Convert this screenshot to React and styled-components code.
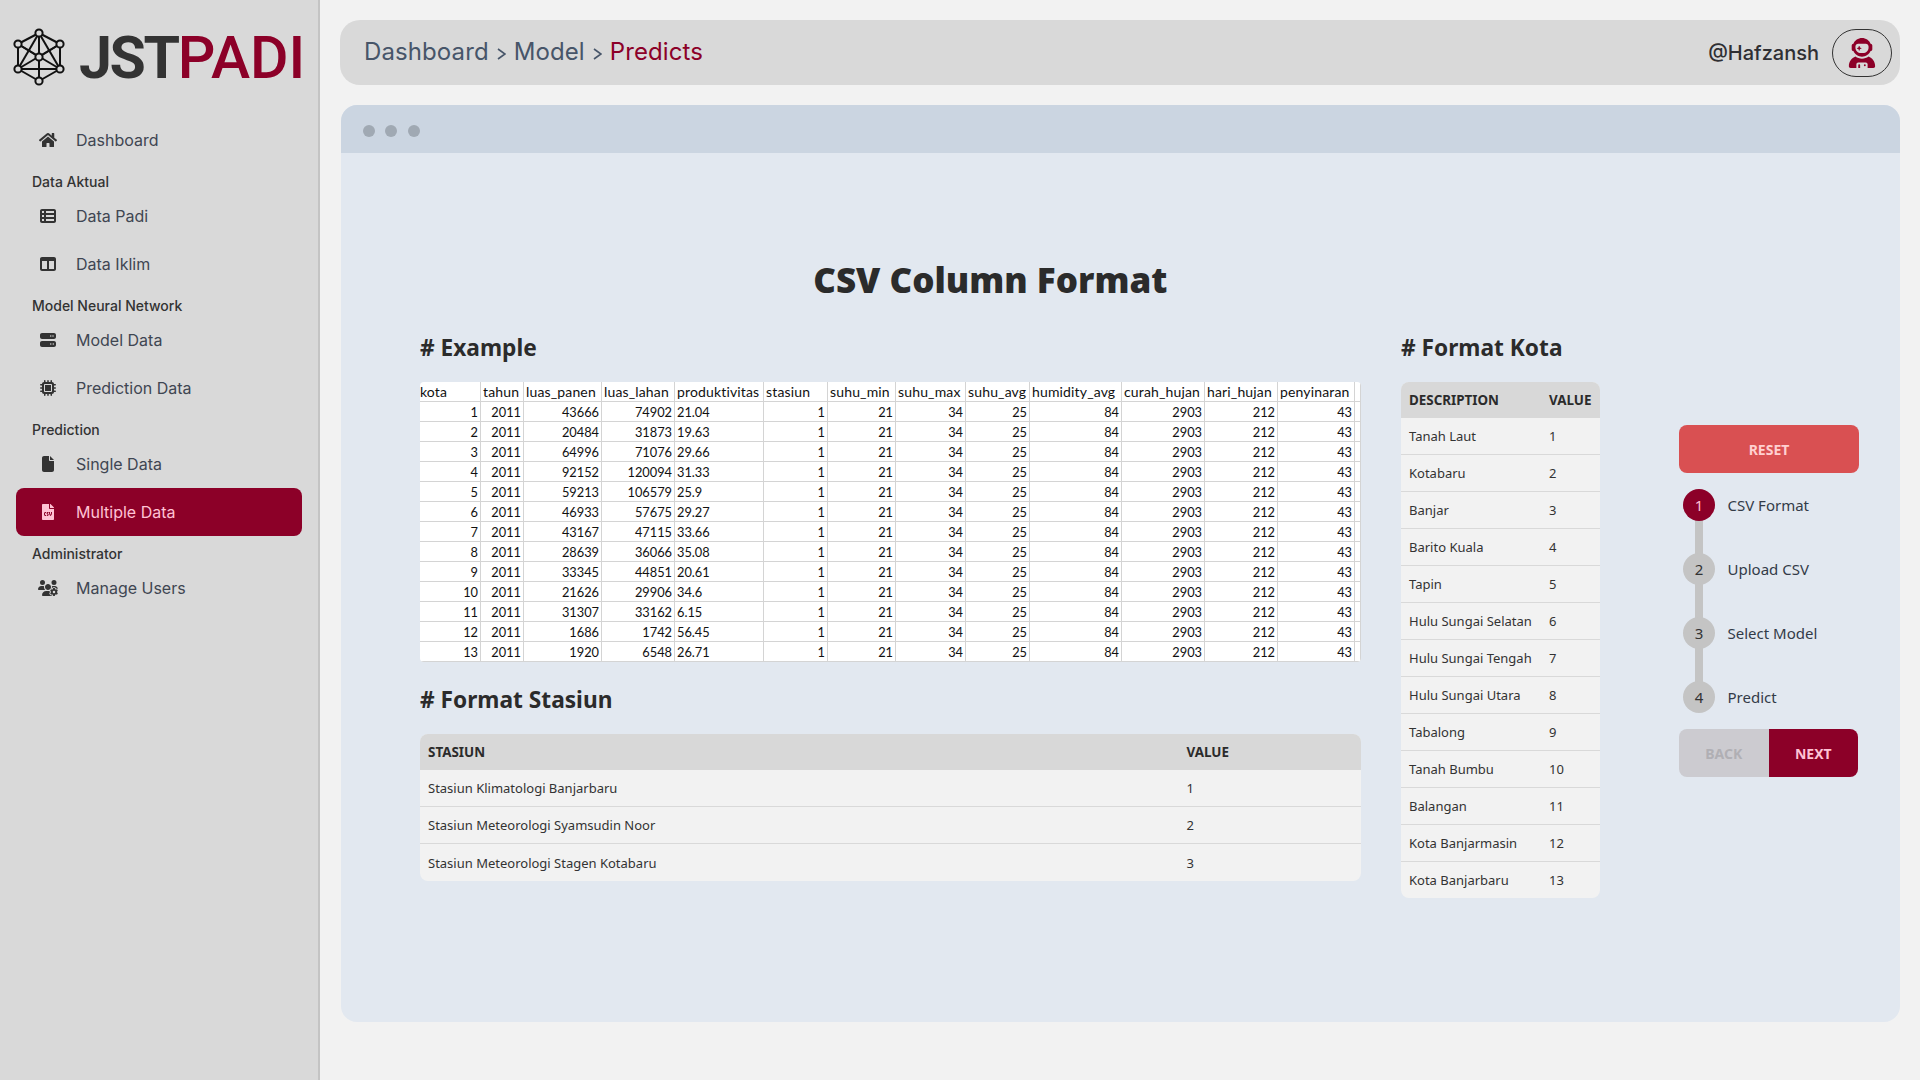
import React from 'react'
import styled, { createGlobalStyle } from 'styled-components'
import { FaHome, FaFileCsv } from 'react-icons/fa'
import {
  FaTableList, FaTableColumns, FaServer, FaMicrochip, FaFile, FaUsersGear, FaUserAstronaut,
} from 'react-icons/fa6'

const GlobalStyle = createGlobalStyle`
  * { box-sizing: border-box; }
  html, body { margin: 0; padding: 0; }
  body {
    background: #f2f2f2;
    font-family: "Noto Sans", sans-serif;
    color: #2b2b2b;
    height: 1080px;
    overflow: hidden;
  }
`

const Page = styled.div`
  display: flex;
  height: 1080px;
`

const Sidebar = styled.aside`
  width: 320px;
  flex: none;
  background: #d9d9d9;
  border-right: 2px solid #c4c4c4;
  padding: 0 16px;
  font-family: Inter, sans-serif;
`

const Brand = styled.div`
  display: flex;
  align-items: center;
  height: 116px;
  margin-left: -5px;
  padding-bottom: 3px;
`

const BrandMark = styled.svg`
  width: 56px;
  height: 60px;
  flex: none;
`

const BrandName = styled.div`
  font-family: Roboto, sans-serif;
  font-size: 59px;
  line-height: 1;
  margin: 1px 0 0 12px;
  font-weight: 700;
  letter-spacing: -2.4px;
  color: #333333;
  & span {
    font-weight: 500;
    letter-spacing: 0;
    color: #8c0028;
  }
`

const NavTitle = styled.div`
  height: 28px;
  line-height: 20px;
  padding: 8px 0 0 16px;
  font-size: 14px;
  font-weight: 500;
  color: #333333;
`

const NavItem = styled.a`
  display: flex;
  align-items: center;
  height: 48px;
  padding-left: 16px;
  border-radius: 8px;
  font-size: 16px;
  color: ${p => (p.$active ? '#ffc2d4' : '#3f4652')};
  background: ${p => (p.$active ? '#8c0028' : 'transparent')};
`

const NavIcon = styled.span`
  display: flex;
  justify-content: center;
  width: 32px;
  margin-right: 12px;
  color: ${p => (p.$active ? '#ffc2d4' : '#333333')};
  & svg {
    width: auto;
    height: ${p => p.$size || 16}px;
  }
`

const Main = styled.main`
  flex: 1;
  min-width: 0;
  padding: 20px 20px 0;
`

const Header = styled.header`
  display: flex;
  align-items: center;
  justify-content: space-between;
  height: 65px;
  padding: 0 8px 0 24px;
  background: #d9d9d9;
  border-radius: 20px;
  font-family: Inter, sans-serif;
`

const Crumbs = styled.nav`
  display: flex;
  align-items: center;
  gap: 8px;
  padding-bottom: 2px;
  font-size: 24px;
  letter-spacing: 0.1px;
  color: #475569;
`

const Crumb = styled.span`
  color: ${p => (p.$current ? '#8c0028' : '#475569')};
`

const CrumbArrow = styled.svg`
  width: 9px;
  height: 14px;
  margin-top: 4px;
`

const User = styled.div`
  display: flex;
  align-items: center;
  gap: 13px;
  font-size: 20px;
  font-weight: 500;
  color: #2f2f33;
`

const Avatar = styled.div`
  display: flex;
  align-items: center;
  justify-content: center;
  width: 60px;
  height: 48px;
  border: 1px solid #333333;
  border-radius: 24px;
  color: #8c0028;
  font-size: 30px;
`

const Window = styled.section`
  margin: 20px 0.5px 0;
  height: 917px;
  background: #e2e8f0;
  border-radius: 16px;
  overflow: hidden;
`

const WindowBar = styled.div`
  display: flex;
  align-items: center;
  gap: 10.5px;
  height: 48px;
  padding: 4px 0 0 22px;
  background: #cbd5e1;
`

const Dot = styled.i`
  width: 12px;
  height: 12px;
  border-radius: 50%;
  background: #a0a9b3;
`

const WindowBody = styled.div`
  display: flex;
`

const Content = styled.div`
  width: 1299.5px;
  flex: none;
  padding: 102px 0 0 79.5px;
`

const Title = styled.h1`
  margin: 0 0 25px -79.5px;
  height: 50px;
  line-height: 50px;
  text-align: center;
  font-size: 35px;
  font-weight: 900;
  color: #2b2b2b;
`

const Columns = styled.div`
  display: grid;
  grid-template-columns: 941px 199px;
  column-gap: 40px;
`

const Heading = styled.h2`
  margin: ${p => (p.$spaced ? '20px' : '0')} 0 17px;
  height: 35px;
  line-height: 35px;
  font-size: 22.7px;
  font-weight: 700;
  color: #2b2b2b;
`

const SheetGrid = styled.div`
  display: grid;
  grid-template-columns: 61px 43px 78px 73px 89px 64px 68px 70px 64px 92px 83px 73px 77px 6px;
  grid-auto-rows: 20px;
  background: #ffffff;
  border-radius: 4px;
  overflow: hidden;
  font-family: Lato, sans-serif;
  color: #111111;
`

const SheetCell = styled.div`
  font-size: ${p => (p.$head ? '14px' : '12.8px')};
  letter-spacing: ${p => (p.$head ? '0.15px' : '0')};
  line-height: ${p => (p.$head ? '20px' : '21px')};
  border-right: 1px solid #d4d4d4;
  border-bottom: 1px solid #d4d4d4;
  white-space: nowrap;
  overflow: hidden;
  text-align: ${p => (p.$left ? 'left' : 'right')};
  padding: ${p => (p.$left ? '0 0 0 2px' : '0 2px 0 0')};
  &:first-child { padding-left: 0; }
`

const DataTable = styled.table`
  width: 100%;
  border-collapse: collapse;
  table-layout: fixed;
  border-radius: 8px;
  overflow: hidden;
  background: #f2f2f2;
  font-size: 13px;
`

const HeadCell = styled.th`
  height: 36px;
  padding: 0 8px;
  text-align: left;
  font-size: 13.4px;
  font-weight: 700;
  background: #d8d8d8;
  color: #2b2b2b;
  width: ${p => p.$width || 'auto'};
`

const BodyCell = styled.td`
  height: 36.93px;
  padding: 0 8px;
  color: #333333;
  border-top: ${p => (p.$first ? '0' : '1px solid #d9d9d9')};
`

const Steps = styled.div`
  width: 180px;
  margin-left: 39px;
  padding-top: 272px;
`

const Reset = styled.button`
  display: block;
  width: 180px;
  height: 48px;
  border: 0;
  border-radius: 8px;
  background: #d95052;
  color: #ffd0d0;
  font-family: "Noto Sans", sans-serif;
  font-size: 14px;
  font-weight: 700;
`

const StepList = styled.ol`
  list-style: none;
  margin: 16px 0;
  padding: 0 0 0 4px;
`

const Step = styled.li`
  position: relative;
  display: flex;
  align-items: center;
  gap: 12.5px;
  height: 32px;
  font-size: 15px;
  color: #333b48;
  & + & { margin-top: 32px; }
  & + &::before {
    content: "";
    position: absolute;
    left: 12px;
    top: -40px;
    width: 8px;
    height: 48px;
    background: #c4c4c4;
  }
`

const StepDot = styled.span`
  position: relative;
  z-index: 1;
  display: flex;
  align-items: center;
  justify-content: center;
  width: 32px;
  height: 32px;
  border-radius: 50%;
  font-size: 15px;
  background: ${p => (p.$active ? '#8c0028' : '#c4c4c4')};
  color: ${p => (p.$active ? '#ffc2d4' : '#333333')};
`

const Pager = styled.div`
  display: flex;
  width: 179px;
  height: 48px;
  border-radius: 8px;
  overflow: hidden;
`

const PagerButton = styled.button`
  flex: 1;
  border: 0;
  font-family: "Noto Sans", sans-serif;
  font-size: 14px;
  font-weight: 700;
  background: ${p => (p.$primary ? '#8c0028' : '#cccbd0')};
  color: ${p => (p.$primary ? '#ffc2d4' : '#b0afb4')};
`

const nav = [
  { label: 'Dashboard', icon: FaHome, size: 18 },
  { title: 'Data Aktual' },
  { label: 'Data Padi', icon: FaTableList },
  { label: 'Data Iklim', icon: FaTableColumns },
  { title: 'Model Neural Network' },
  { label: 'Model Data', icon: FaServer },
  { label: 'Prediction Data', icon: FaMicrochip },
  { title: 'Prediction' },
  { label: 'Single Data', icon: FaFile },
  { label: 'Multiple Data', icon: FaFileCsv, active: true },
  { title: 'Administrator' },
  { label: 'Manage Users', icon: FaUsersGear, size: 20 },
]

const sheetHead = ['kota', 'tahun', 'luas_panen', 'luas_lahan', 'produktivitas', 'stasiun', 'suhu_min', 'suhu_max', 'suhu_avg', 'humidity_avg', 'curah_hujan', 'hari_hujan', 'penyinaran', '']

const sheetRows = [
  [1, 43666, 74902, '21.04'],
  [2, 20484, 31873, '19.63'],
  [3, 64996, 71076, '29.66'],
  [4, 92152, 120094, '31.33'],
  [5, 59213, 106579, '25.9'],
  [6, 46933, 57675, '29.27'],
  [7, 43167, 47115, '33.66'],
  [8, 28639, 36066, '35.08'],
  [9, 33345, 44851, '20.61'],
  [10, 21626, 29906, '34.6'],
  [11, 31307, 33162, '6.15'],
  [12, 1686, 1742, '56.45'],
  [13, 1920, 6548, '26.71'],
]

const stasiun = ['Stasiun Klimatologi Banjarbaru', 'Stasiun Meteorologi Syamsudin Noor', 'Stasiun Meteorologi Stagen Kotabaru']

const kota = ['Tanah Laut', 'Kotabaru', 'Banjar', 'Barito Kuala', 'Tapin', 'Hulu Sungai Selatan', 'Hulu Sungai Tengah', 'Hulu Sungai Utara', 'Tabalong', 'Tanah Bumbu', 'Balangan', 'Kota Banjarmasin', 'Kota Banjarbaru']

const steps = ['CSV Format', 'Upload CSV', 'Select Model', 'Predict']

// logo: a hexagon of nodes with spokes
const nodes = [[28, 6], [7, 17], [49, 17], [28, 30], [7, 42], [49, 42], [28, 54]]
const edges = [[0, 1], [0, 2], [1, 4], [2, 5], [4, 6], [5, 6], [0, 6], [0, 4], [0, 5], [1, 5], [2, 4], [4, 5], [1, 3], [2, 3]]

const Logo = () => (
  <BrandMark viewBox="0 0 56 60">
    {edges.map(([a, b]) => (
      <line key={`${a}-${b}`} x1={nodes[a][0]} y1={nodes[a][1]} x2={nodes[b][0]} y2={nodes[b][1]} stroke="#111" strokeWidth="2" />
    ))}
    {nodes.map(([x, y]) => (
      <circle key={`${x}-${y}`} cx={x} cy={y} r="3.6" fill="#d9d9d9" stroke="#111" strokeWidth="2" />
    ))}
  </BrandMark>
)

const Arrow = () => (
  <CrumbArrow viewBox="0 0 9 14">
    <path d="M1 2l7 5-7 5" fill="none" stroke="currentColor" strokeWidth="1.6" />
  </CrumbArrow>
)

const Sheet = () => (
  <SheetGrid>
    {sheetHead.map((h, i) => <SheetCell key={i} $head $left>{h}</SheetCell>)}
    {sheetRows.map(row => {
      const cells = [row[0], 2011, row[1], row[2], row[3], 1, 21, 34, 25, 84, 2903, 212, 43, '']
      return cells.map((c, i) => <SheetCell key={`${row[0]}-${i}`} $left={i === 4}>{c}</SheetCell>)
    })}
  </SheetGrid>
)

const ValueTable = ({ head, valueWidth, rows }) => (
  <DataTable>
    <thead>
      <tr>
        <HeadCell>{head}</HeadCell>
        <HeadCell $width={valueWidth}>VALUE</HeadCell>
      </tr>
    </thead>
    <tbody>
      {rows.map((r, i) => (
        <tr key={r}>
          <BodyCell $first={i === 0}>{r}</BodyCell>
          <BodyCell $first={i === 0}>{i + 1}</BodyCell>
        </tr>
      ))}
    </tbody>
  </DataTable>
)

const App = () => {
  return (
    <Page>
      <GlobalStyle />
      <Sidebar>
        <Brand>
          <Logo />
          <BrandName>JST<span>PADI</span></BrandName>
        </Brand>
        {nav.map(n => {
          if (n.title) return <NavTitle key={n.title}>{n.title}</NavTitle>
          const Icon = n.icon
          return (
            <NavItem key={n.label} $active={n.active}>
              <NavIcon $active={n.active} $size={n.size}><Icon /></NavIcon>
              {n.label}
            </NavItem>
          )
        })}
      </Sidebar>
      <Main>
        <Header>
          <Crumbs>
            <Crumb>Dashboard</Crumb>
            <Arrow />
            <Crumb>Model</Crumb>
            <Arrow />
            <Crumb $current>Predicts</Crumb>
          </Crumbs>
          <User>
            @Hafzansh
            <Avatar><FaUserAstronaut /></Avatar>
          </User>
        </Header>
        <Window>
          <WindowBar>
            <Dot /><Dot /><Dot />
          </WindowBar>
          <WindowBody>
            <Content>
              <Title>CSV Column Format</Title>
              <Columns>
                <div>
                  <Heading># Example</Heading>
                  <Sheet />
                  <Heading $spaced># Format Stasiun</Heading>
                  <ValueTable head="STASIUN" valueWidth="182.5px" rows={stasiun} />
                </div>
                <div>
                  <Heading># Format Kota</Heading>
                  <ValueTable head="DESCRIPTION" valueWidth="59px" rows={kota} />
                </div>
              </Columns>
            </Content>
            <Steps>
              <Reset>RESET</Reset>
              <StepList>
                {steps.map((s, i) => (
                  <Step key={s}>
                    <StepDot $active={i === 0}>{i + 1}</StepDot>
                    {s}
                  </Step>
                ))}
              </StepList>
              <Pager>
                <PagerButton>BACK</PagerButton>
                <PagerButton $primary>NEXT</PagerButton>
              </Pager>
            </Steps>
          </WindowBody>
        </Window>
      </Main>
    </Page>
  )
}

export default App
